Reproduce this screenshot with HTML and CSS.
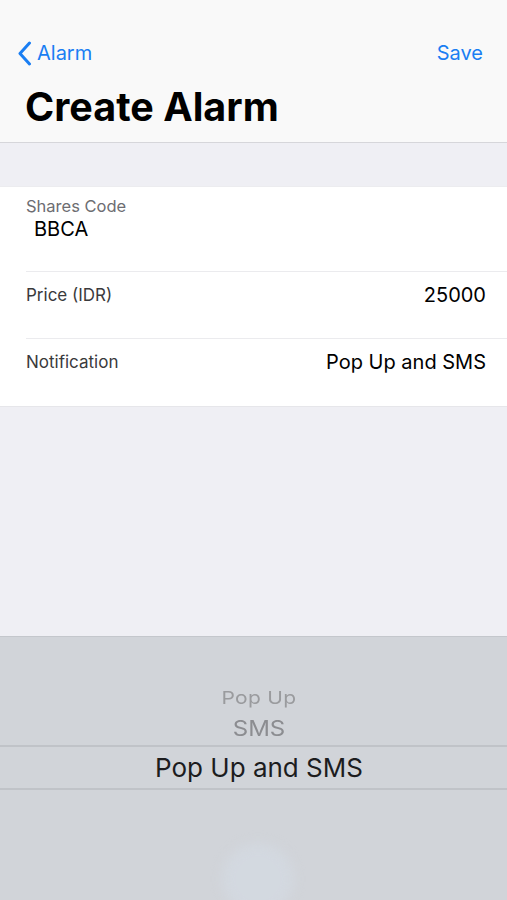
FILE: index.html
```html
<!DOCTYPE html>
<html>
<head>
<meta charset="utf-8">
<link rel="stylesheet" href="styles.css">
</head>
<body>
<div class="screen">
  <header class="nav">
    <div class="nav-bar">
      <a class="back">
        <svg class="chev" width="15" height="25" viewBox="0 0 15 25"><path d="M12.5 2 L3 12.5 L12.5 23" fill="none" stroke="#1a7ef3" stroke-width="3" stroke-linecap="round" stroke-linejoin="round"/></svg>
        <span>Alarm</span>
      </a>
      <a class="save">Save</a>
    </div>
    <h1 class="title">Create Alarm</h1>
  </header>
  <div class="spacer"></div>
  <section class="form">
    <div class="row row-stack">
      <div class="label small">Shares Code</div>
      <div class="code">BBCA</div>
    </div>
    <div class="row row-inline">
      <div class="label">Price (IDR)</div>
      <div class="value">25000</div>
    </div>
    <div class="row row-inline last">
      <div class="label">Notification</div>
      <div class="value">Pop Up and SMS</div>
    </div>
  </section>
  <div class="filler"></div>
  <section class="picker">
    <div class="opt opt1">Pop Up</div>
    <div class="opt opt2">SMS</div>
    <div class="opt sel">Pop Up and SMS</div>
    <div class="touch"></div>
  </section>
</div>
</body>
</html>
```
FILE: styles.css
```css
* { box-sizing: border-box; margin: 0; padding: 0; }
html, body { width: 507px; height: 900px; overflow: hidden; }
body { font-family: Inter, "Liberation Sans", sans-serif; background: #efeff4; }
.screen { display: flex; flex-direction: column; height: 900px; }
.nav { height: 143px; background: #f9f9f9; border-bottom: 1px solid #d6d6da; display: flex; flex-direction: column; }
.nav-bar { height: 50px; margin-top: 28px; display: flex; align-items: center; justify-content: space-between; padding: 0 24px 0 17px; }
.back { display: flex; align-items: center; gap: 5px; color: #1a7ef3; font-size: 20px; }
.chev { display: block; }
.save { color: #1a7ef3; font-size: 20px; }
.title { font-size: 39.5px; font-weight: 700; color: #000; padding-left: 25px; line-height: 1; margin-top: 10px; }
.spacer { height: 43px; }
.form { background: #fff; border-top: 1px solid #ececef; border-bottom: 1px solid #e6e6ea; }
.row { margin-left: 26px; padding-right: 21px; border-bottom: 1px solid #ebebee; }
.row.last { border-bottom: none; }
.row-stack { height: 85px; padding-top: 9px; }
.row-inline { height: 67px; display: flex; align-items: flex-start; justify-content: space-between; padding-top: 12px; }
.label { font-size: 17px; color: #3a3a3c; line-height: 22px; }
.label.small { color: #6d6d72; font-size: 16.5px; line-height: 20px; }
.code { font-size: 20px; color: #000; padding-left: 8px; margin-top: 1px; line-height: 24px; }
.value { font-size: 20px; color: #000; line-height: 22px; }
.filler { flex: 1; }
.picker { height: 264px; background: #d1d4d9; border-top: 1px solid #c4c7cc; position: relative; display: flex; flex-direction: column; align-items: center; padding-top: 46px; padding-left: 11px; }
.opt { text-align: center; }
.opt1 { font-size: 21px; color: #9a9b9e; height: 30px; line-height: 30px; letter-spacing: 0.3px; transform: scaleY(0.85); }
.opt2 { font-size: 24px; color: #8c8d91; height: 32px; line-height: 32px; transform: scaleY(0.92); }
.sel { align-self: stretch; margin-left: -11px; padding-left: 11px; font-size: 26px; color: #1c1c1e; height: 45px; line-height: 42px; border-top: 2px solid #c0c3c8; border-bottom: 2px solid #c0c3c8; }
.touch { position: absolute; left: 222px; top: 206px; width: 72px; height: 72px; border-radius: 50%; background: rgba(214, 222, 232, 0.5); filter: blur(6px); }
```
